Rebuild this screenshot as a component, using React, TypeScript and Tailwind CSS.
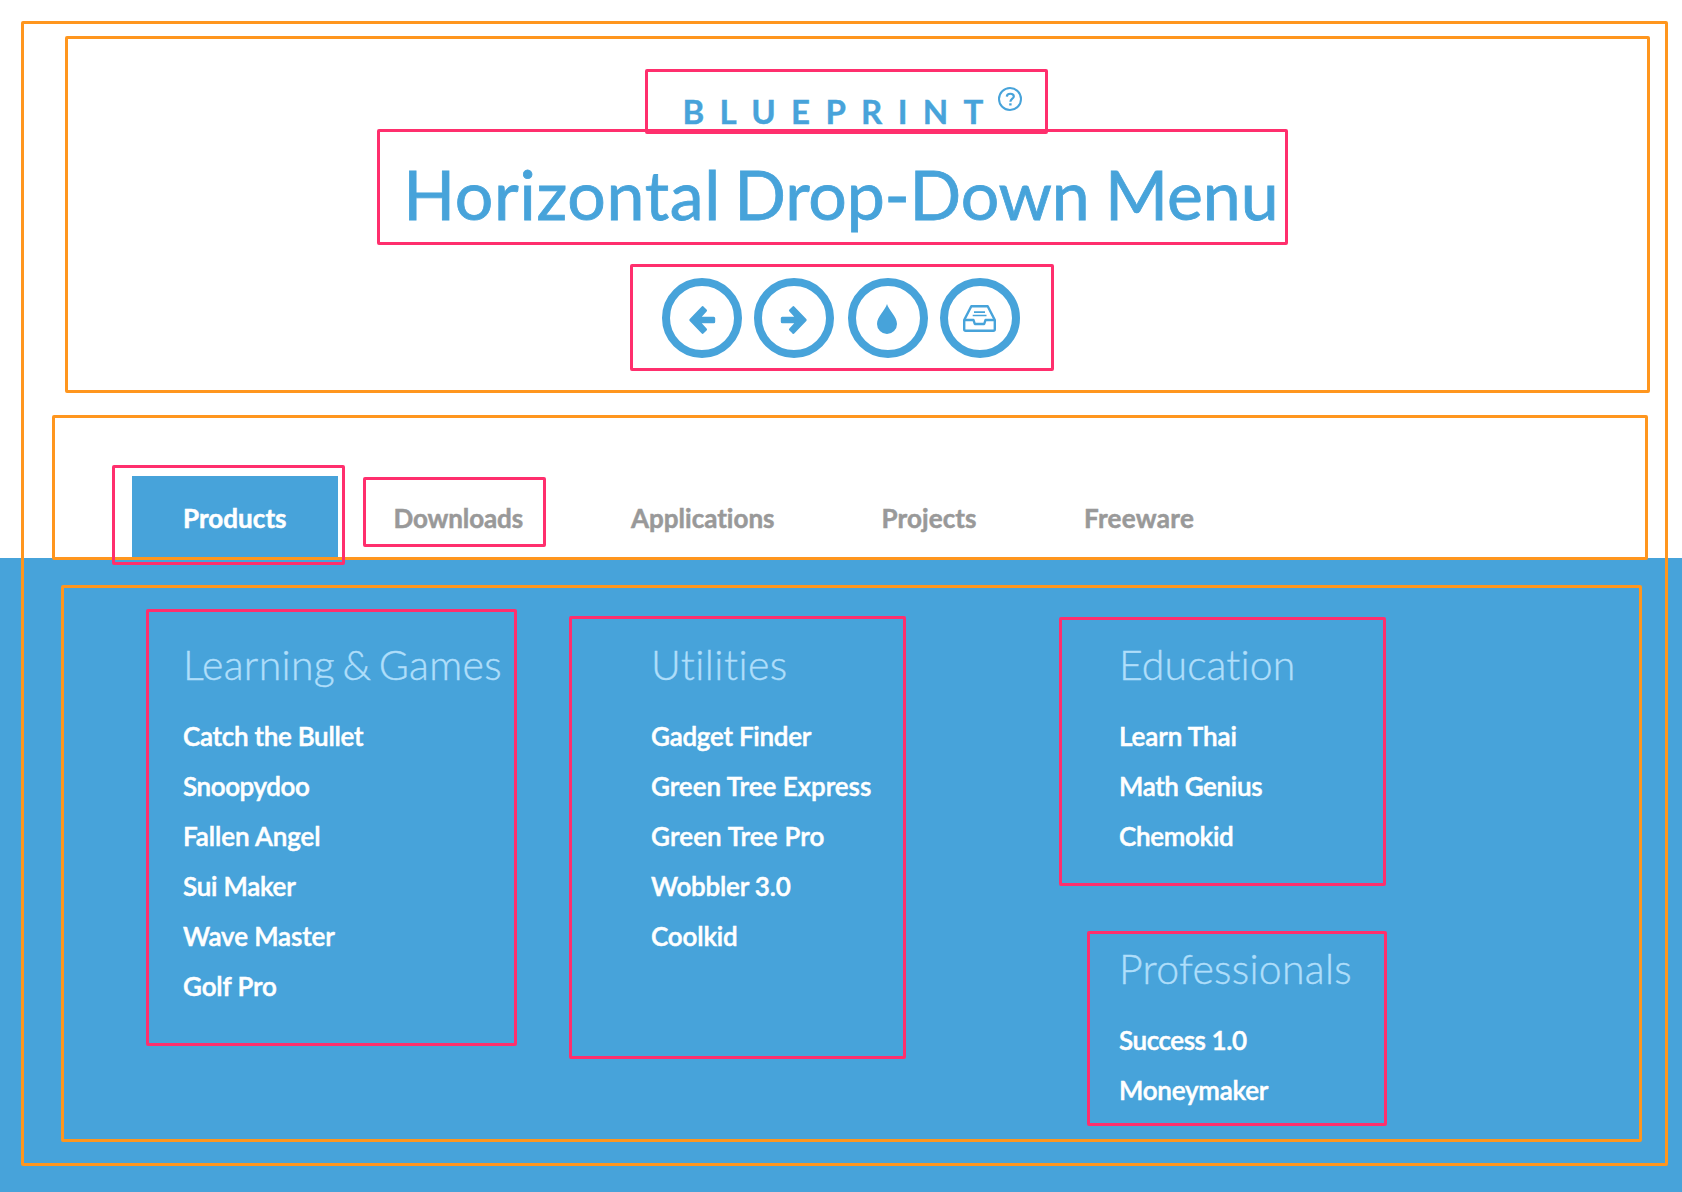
import type { ReactNode } from "react";

type Item = [label: string, tracking: string];

function Circle({ children, className = "" }: { children: ReactNode; className?: string }) {
  return (
    <a className={`flex size-20 items-center justify-center rounded-full border-8 border-[#47a3da] text-[#47a3da] ${className}`}>
      {children}
    </a>
  );
}

function Arrow({ className = "" }: { className?: string }) {
  return (
    <svg width="28" height="30" viewBox="-1 -1 28 30" className={className} fill="currentColor" stroke="currentColor" strokeWidth="3" strokeLinejoin="round">
      <path d="M1.800 14 13.600 1.700 16.500 4.600 9.400 12.200H24.700V15.800H9.400L16.500 23.400 13.600 26.300Z" />
    </svg>
  );
}

function Group({
  title,
  items,
  className = "",
  titleTracking = "tracking-[0.35px]",
}: {
  title: string;
  items: Item[];
  className?: string;
  titleTracking?: string;
}) {
  return (
    <section className={className}>
      <h4 className={`mb-[20px] text-[41px] leading-[52px] font-light [word-spacing:-4px] whitespace-nowrap text-[#afdefa] [-webkit-text-stroke:0.4px] ${titleTracking}`}>
        {title}
      </h4>
      <ul>
        {items.map(([label, tracking]) => (
          <li key={label} className={`text-[26px] leading-[50px] font-semibold whitespace-nowrap [-webkit-text-stroke:0.5px] ${tracking}`}>
            {label}
          </li>
        ))}
      </ul>
    </section>
  );
}

const learning: Item[] = [
  ["Catch the Bullet", "tracking-[-0.28px]"],
  ["Snoopydoo", "tracking-[-0.4px]"],
  ["Fallen Angel", "tracking-[-0.08px]"],
  ["Sui Maker", "tracking-[-0.25px]"],
  ["Wave Master", "tracking-[-0.12px]"],
  ["Golf Pro", "tracking-[-0.13px]"],
];
const utilities: Item[] = [
  ["Gadget Finder", "tracking-[-0.25px]"],
  ["Green Tree Express", "tracking-normal"],
  ["Green Tree Pro", "tracking-[0.15px]"],
  ["Wobbler 3.0", "tracking-[-0.2px]"],
  ["Coolkid", "tracking-[-0.15px]"],
];
const education: Item[] = [
  ["Learn Thai", "tracking-[-0.1px]"],
  ["Math Genius", "tracking-[-0.35px]"],
  ["Chemokid", "tracking-[-0.3px]"],
];
const professionals: Item[] = [
  ["Success 1.0", "tracking-[-0.43px]"],
  ["Moneymaker", "tracking-[-0.22px]"],
];

const outline = "pointer-events-none absolute rounded-[2px] border-[3px]";
const orange = `${outline} border-[#ff961e]`;
const pink = `${outline} border-[#ff2f6d]`;

export default function App() {
  return (
    <div className="relative h-[1192px] w-[1682px] overflow-hidden bg-white font-['Lato',sans-serif] [font-variant-ligatures:none]">
      <div className="flex h-full flex-col">
        <header className="flex flex-col items-center pt-[89px] text-[#47a3da]">
          <div className="ml-[23px] flex h-11 w-[340px] items-start">
            <span className="w-[315px] text-[33px] leading-[44px] font-bold tracking-[15.3px] whitespace-nowrap [-webkit-text-stroke:0.4px]">BLUEPRINT</span>
            <svg width="24" height="24" viewBox="0 0 24 24" className="-mt-[2px] shrink-0" fill="none" stroke="currentColor" strokeWidth="2">
              <circle cx="12" cy="12" r="11" />
              <path d="M8.8 9.6C8.9 5.7 15.8 5.900 15.8 9.400C15.8 11.7 12.4 11.800 12.4 14.8" strokeWidth="2.2" />
              <path d="M11.200 17.400h2.400" strokeWidth="2.200" />
            </svg>
          </div>
          <h1 className="mt-[17px] text-[68px] leading-[88px] [word-spacing:-2px] whitespace-nowrap [-webkit-text-stroke:0.8px]">
            <span className="mr-[-2px] tracking-[0.68px]">Horizontal</span> <span className="tracking-[-0.2px]">Drop-Down</span> Menu
          </h1>
          <nav className="mt-10 flex gap-3">
            <Circle><Arrow className="mt-[3px]" /></Circle>
            <Circle><Arrow className="mt-[3px] rotate-180" /></Circle>
            <Circle className="ml-0.5">
              <svg width="20" height="30" viewBox="0 0 20 30" className="mt-[2px] mr-[2px]" fill="currentColor">
                <path d="M10 0C11.5 6 20 12.5 20 20A10 10 0 0 1 0 20C0 12.5 8.500 6 10 0Z" />
              </svg>
            </Circle>
            <Circle>
              <svg width="33" height="27" viewBox="0 0 33 27" className="mt-px mr-px" fill="none" stroke="currentColor" strokeWidth="2.4" strokeLinejoin="round">
                <path d="M1.200 15 8.300 1.300H24.700L31.800 15V24.300Q31.800 25.800 30.300 25.800H2.700Q1.200 25.800 1.200 24.300Z" />
                <path d="M1.200 15H10.500L11.800 19H21.200L22.500 15H31.800" />
                <path d="M11 7.200H22M9.700 10.500H23.500" strokeWidth="1.700" />
              </svg>
            </Circle>
          </nav>
        </header>

        <nav className="mt-[118px] flex h-[82px] gap-[5.5px] pl-[132px] text-[26px] leading-[84px] font-bold whitespace-nowrap text-[#999] [-webkit-text-stroke:0.5px]">
          <a className="w-[206px] bg-[#47a3da] pl-[51px] tracking-[0.05px] text-white">Products</a>
          <a className="w-[231px] pl-[50px] tracking-[-0.13px]">Downloads</a>
          <a className="w-[246px] pl-[51px]">Applications</a>
          <a className="w-[197px] pl-[50px] tracking-[0.1px]">Projects</a>
          <a className="pl-[50px] tracking-[0.3px]">Freeware</a>
        </nav>

        <main className="flex flex-1 bg-[#47a3da] pt-[81px] pl-[183px] text-white">
          <Group className="w-[468px]" title="Learning & Games" items={learning} titleTracking="tracking-[0.3px]" />
          <Group className="w-[468px]" title="Utilities" items={utilities} titleTracking="tracking-[0.45px]" />
          <div>
            <Group title="Education" items={education} titleTracking="tracking-[0.1px]" />
            <Group className="mt-[82px]" title="Professionals" items={professionals} titleTracking="tracking-[0.28px]" />
          </div>
        </main>
      </div>

      <div className={`${orange} top-[21px] left-[21px] h-[1145px] w-[1647px]`} />
      <div className={`${orange} top-[36px] left-[65px] h-[357px] w-[1585px]`} />
      <div className={`${orange} top-[415px] left-[52px] h-[145px] w-[1596px]`} />
      <div className={`${orange} top-[585px] left-[61px] h-[557px] w-[1581px]`} />
      <div className={`${pink} top-[69px] left-[645px] h-[65px] w-[403px]`} />
      <div className={`${pink} top-[129px] left-[377px] h-[116px] w-[911px]`} />
      <div className={`${pink} top-[264px] left-[630px] h-[107px] w-[424px]`} />
      <div className={`${pink} top-[465px] left-[112px] h-[100px] w-[233px]`} />
      <div className={`${pink} top-[477px] left-[363px] h-[70px] w-[183px]`} />
      <div className={`${pink} top-[609px] left-[146px] h-[437px] w-[371px]`} />
      <div className={`${pink} top-[616px] left-[569px] h-[443px] w-[337px]`} />
      <div className={`${pink} top-[617px] left-[1059px] h-[269px] w-[327px]`} />
      <div className={`${pink} top-[931px] left-[1087px] h-[195px] w-[300px]`} />
    </div>
  );
}
